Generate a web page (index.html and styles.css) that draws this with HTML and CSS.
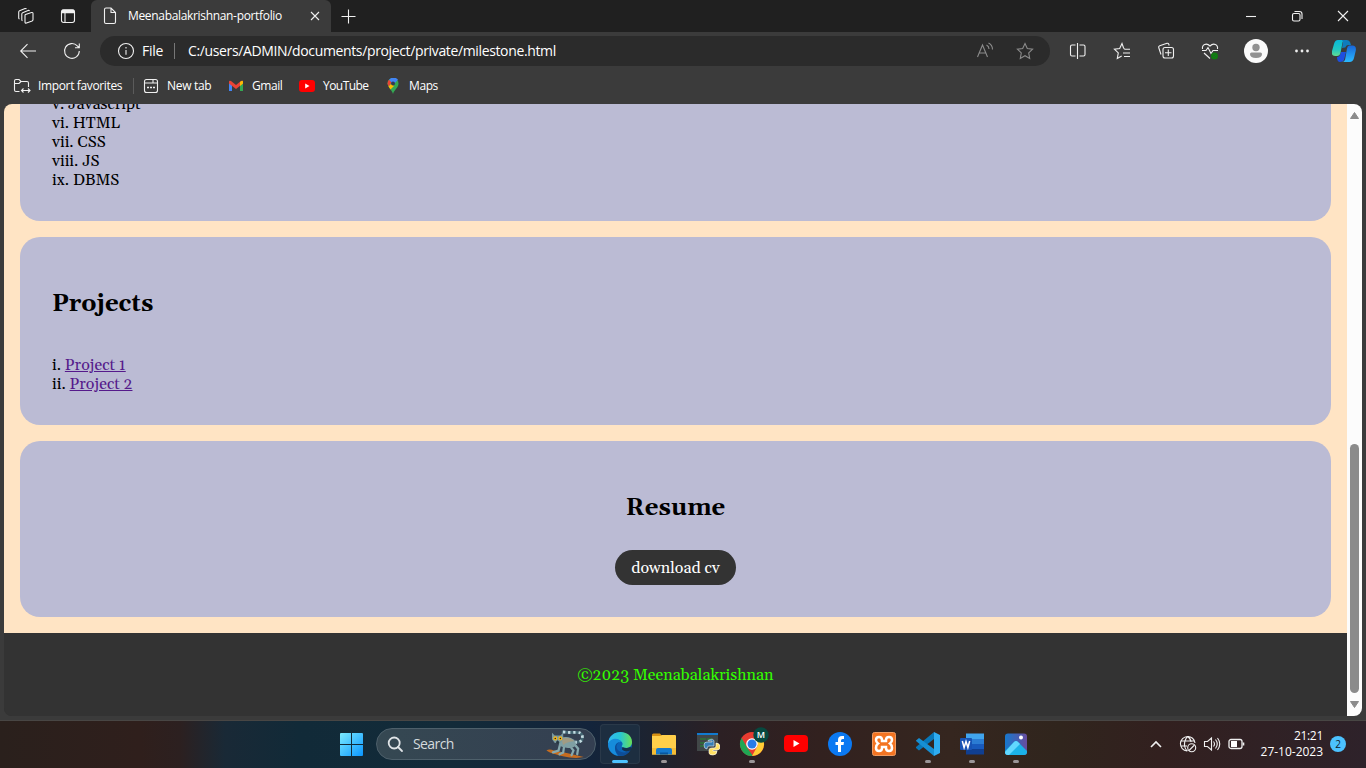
FILE: index.html
```html
<!DOCTYPE html>
<html lang="en">
<head>
<meta charset="utf-8">
<title>Meenabalakrishnan-portfolio</title>
<link rel="stylesheet" href="styles.css">
</head>
<body>
<div class="browser">
  <div class="titlebar">
    <div class="cell tb-a"><svg width="18" height="18" viewBox="0 0 18 18" class="line"><path d="M8.500 7.500 14.500 5.500q1.500-.3 1.500 1v6q0 1-.9 1.400L9.500 16q-1.500.5-1.500-1V8.500q0-.7.5-1zM5.500 13.800q-.7-.3-.7-1.300V7q0-.9.9-1.300L11 3.500q1-.3 1.600.4M2.500 12q-.8-.3-.8-1.300V5q0-.9.9-1.300L8 1.600q1-.3 1.500.4"/></svg></div>
    <div class="cell tb-b"><svg width="16" height="16" viewBox="0 0 16 16" class="line"><rect x="1.500" y="1.700" width="13" height="12.800" rx="2.200"/><path d="M2 3.500h12" stroke-width="3.500"/><path d="M5 5v9.500"/></svg></div>
    <div class="tab">
      <svg width="14" height="18" viewBox="0 0 14 18" class="line"><path d="M1.500 2.500q0-1.500 1.500-1.500h5l4.500 4.500V15q0 1.500-1.500 1.500H3Q1.500 16.500 1.500 15zM8 1v4.500h4.500"/></svg>
      <span class="tabtitle">Meenabalakrishnan-portfolio</span>
      <svg width="10" height="10" viewBox="0 0 10 10" class="line"><path d="M1 1l8 8M9 1l-8 8"/></svg>
    </div>
    <div class="cell plus"><svg width="15" height="15" viewBox="0 0 15 15" class="line"><path d="M7.500.5v14M.5 7.500h14"/></svg></div>
    <div class="winbtns">
      <div class="cell"><svg width="12" height="12" viewBox="0 0 12 12" class="line"><path d="M1 6.500h10"/></svg></div>
      <div class="cell"><svg width="12" height="12" viewBox="0 0 12 12" class="line"><rect x="1.500" y="3.500" width="7.500" height="7.500" rx="1.500"/><path d="M3.500 1.500H8.500Q11 1.500 11 4V9"/></svg></div>
      <div class="cell"><svg width="12" height="12" viewBox="0 0 12 12" class="line"><path d="M1 1l10 10M11 1 1 11"/></svg></div>
    </div>
  </div>
  <div class="toolbar">
    <div class="cell back"><svg width="18" height="16" viewBox="0 0 18 16" class="line"><path d="M17 8H2M8.500 1.200 1.700 8l6.800 6.800"/></svg></div>
    <div class="cell reload"><svg width="18" height="18" viewBox="0 0 18 18" class="line"><path d="M16.300 9A7.400 7.400 0 1 1 14.300 3.900L16 5.500M16.300 1.500v4.200H12"/></svg></div>
    <div class="urlbar">
      <svg width="18" height="18" viewBox="0 0 18 18" class="line"><circle cx="9" cy="9" r="7.500"/><path d="M9 8v4.800M9 5v1.500"/></svg>
      <span class="file">File</span><i class="sep"></i>
      <span class="url">C:/users/ADMIN/documents/project/private/milestone.html</span>
      <svg class="dim read" width="18" height="18" viewBox="0 0 18 18"><path d="M1.500 15 6.500 3l5 12M3.200 11h6.600M10.500 3q2.500 1.300 2.500 4M12.500 1q4 2 4 6.500"/></svg>
      <svg class="dim" width="18" height="18" viewBox="0 0 18 18"><path d="m9 1.500 2.300 5 5.300.7-3.900 3.700 1 5.500L9 13.700l-4.700 2.700 1-5.500L1.400 7.200l5.300-.7z"/></svg>
    </div>
    <div class="tools">
      <div class="cell"><svg width="18" height="18" viewBox="0 0 18 18" class="line"><path d="M8.500 1v16M6.500 3H3Q1.500 3 1.500 4.500v8Q1.500 14 3 14h3.500M10.500 3h4Q16 3 16 4.500v8q0 1.500-1.500 1.500h-4"/></svg></div>
      <div class="cell"><svg width="18" height="18" viewBox="0 0 18 18" class="line"><path d="M10.500 5.800 9 1.500 6.700 6.500l-5.300.7 3.900 3.700-1 5.500L8.700 14M11.500 7.200H17M10 11h7M11 14.500h6M10.500 5.800l1 1.400"/></svg></div>
      <div class="cell"><svg width="18" height="18" viewBox="0 0 18 18" class="line"><rect x="6" y="5.500" width="10.500" height="10.500" rx="2"/><path d="M11.300 7.500v6.500M8 10.800h6.500M4 12.500 1.700 5.500q-.4-1.300 1-1.800L10 1.300q1.300-.3 1.800 1l.4 1.200"/></svg></div>
      <div class="cell"><svg width="18" height="18" viewBox="0 0 18 18" class="line"><path d="M1.500 7C.8 2.500 5.500.5 9 4c3.500-3.500 8.200-1.500 7.500 3M1 8.500h4L7 5.500l3 6 2-3h5M3 11l6 5.500"/><circle cx="13.500" cy="14" r="3.500" fill="#107c10" stroke="none"/><path d="m12 14 1 1 2-2" stroke="#263" stroke-width=".7"/></svg></div>
      <div class="cell avatar"><svg width="24" height="24" viewBox="0 0 24 24"><circle cx="12" cy="12" r="12" fill="#fafafa"/><circle cx="12" cy="8.500" r="3.700" fill="#919191"/><path d="M6 15q0-1.500 1.500-1.500h9Q18 13.500 18 15q0 4-6 4t-6-4z" fill="#919191"/></svg></div>
      <div class="cell"><svg width="16" height="4" viewBox="0 0 16 4"><g fill="#eee"><circle cx="2.500" cy="2" r="1.400"/><circle cx="8" cy="2" r="1.400"/><circle cx="13.500" cy="2" r="1.400"/></g></svg></div>
      <div class="cell cop"><svg width="24" height="24" viewBox="0 0 24 24">
        <defs><linearGradient id="c1" x2="0" y2="1"><stop stop-color="#08b8d8"/><stop offset=".6" stop-color="#22c7c1"/><stop offset="1" stop-color="#62dd93"/></linearGradient><linearGradient id="c2" x2="0" y2="1"><stop stop-color="#1865d8"/><stop offset="1" stop-color="#2abaff"/></linearGradient></defs>
        <path d="M9 13h5l-2 8q-1 2-4 2-3 0-3-5 3 0 4-5z" fill="#1d4fe0"/><path d="M6 1h7q-2 0-2.500 2.500L8.500 14q-.8 3-3.500 3H3q-4 0-3-5L2 5q1-4 4-4z" fill="url(#c1)"/><path d="M10 1h5q2.500 0 3.200 2.500L19 6h-3q-2 0-2.700 2.500L10 9l1-6z" fill="#0f7cbc"/><path d="M17 6.500h3.500q4 0 3.300 5L22 19q-1 4-4.500 4H10q2.500 0 3.100-2.500L15 9.500q.5-2.500 2-3z" fill="url(#c2)"/></svg></div>
    </div>
  </div>
  <div class="favbar">
    <svg width="18" height="16" viewBox="0 0 18 16" class="line"><path d="M6.500 13.500H3q-1.500 0-1.500-1.500V3q0-1.500 1.500-1.500h3L8 3.500h6q1.500 0 1.500 1.500v4M1.500 5.500H6l2-2M8.500 12.500H17M10.500 10.500l-2 2 2 2M15 10.500l2 2-2 2"/></svg>
    <span class="f1">Import favorites</span><i class="sep s2"></i>
    <svg class="line i2" width="16" height="16" viewBox="0 0 16 16"><rect x="1.500" y="1.500" width="13" height="13" rx="2"/><path d="M1.500 5h8.500V1.500M10 5h4.500"/><path d="M4 9.500h2M7 9.500h2M10 9.500h2" stroke-width="1.600"/></svg>
    <span class="f2">New tab</span>
    <svg class="i3" width="16" height="12" viewBox="0 0 16 12"><path d="M1 1v10h3V5" fill="#4285f4"/><path d="M12 5v6h3V1" fill="#34a853"/><path d="M1 2q0-2 2-1l5 4 5-4q2-1 2 1v1.500L8 9 1 3.500z" fill="#ea4335"/><path d="M12 2q3-2.500 3 0v1.500L12 6z" fill="#fbbc04"/></svg>
    <span class="f3">Gmail</span>
    <svg class="i4" width="16" height="12" viewBox="0 0 16 12"><rect width="16" height="12" rx="3" fill="#f00"/><path d="m6.200 3.500 4.300 2.500-4.300 2.500z" fill="#fff"/></svg>
    <span class="f4">YouTube</span>
    <svg class="i5" width="12" height="16" viewBox="0 0 12 16"><path d="M6 0a5.500 5.500 0 0 1 5.500 5.500C11.500 10 7.500 11 6 16 5 12 1 9.500.5 5.500A5.500 5.500 0 0 1 6 0z" fill="#34a853"/><path d="M2 2a5.500 5.500 0 0 1 9-.2L6 7z" fill="#4285f4"/><path d="M2 1.800 4.500 4.500 1.500 8.500Q-.5 4.500 2 1.800z" fill="#ea4335"/><path d="m1.500 8.500 3-3L7 8l-3.500 3.500z" fill="#fbbc04"/><circle cx="6" cy="5.500" r="2" fill="#333b50"/></svg>
    <span class="f5">Maps</span>
  </div>
  <div class="viewport">
    <div class="page">
      <section class="card skills"><div class="cut">v. Javascript</div><div>vi. HTML</div><div>vii. CSS</div><div>viii. JS</div><div>ix. DBMS</div></section>
      <section class="card projects"><h2>Projects</h2><div>i. <a href="#">Project 1</a></div><div>ii. <a href="#">Project 2</a></div></section>
      <section class="card resume"><h2>Resume</h2><a class="btn" href="#">download cv</a></section>
      <footer>©2023 Meenabalakrishnan</footer>
    </div>
    <div class="scroll"><svg width="9" height="7" viewBox="0 0 9 7"><path d="M4.500.5 8.500 6.500H.5z" fill="#8b8b8b" stroke="#8b8b8b" stroke-linejoin="round"/></svg><div class="thumb"></div><svg width="9" height="7" viewBox="0 0 9 7"><path d="M4.500 6.500.5.500h8z" fill="#8b8b8b" stroke="#8b8b8b" stroke-linejoin="round"/></svg></div>
  </div>
</div>
<div class="taskbar">
  <svg class="start" width="24" height="24" viewBox="0 0 24 24"><defs><linearGradient id="w" x2="1" y2="1"><stop stop-color="#7cebff"/><stop offset="1" stop-color="#0a96ff"/></linearGradient></defs><path d="M0 2q0-1 1-1h10v11H0zM12 1h10q1 0 1 1v10H12zM0 13h11v11H1q-1 0-1-1zM12 13h11v10q0 1-1 1H12z" fill="url(#w)"/></svg>
  <div class="search">
    <svg width="17" height="17" viewBox="0 0 17 17" fill="none" stroke="#e0e4e7" stroke-width="1.800"><circle cx="7.200" cy="7" r="5.500"/><path d="m11 11 4 4" stroke-linecap="round"/></svg>
    <span>Search</span>
    <svg class="lemur" width="40" height="28" viewBox="0 0 42 30"><path d="M0 22q3-2 8 0l15 3 17 4-8 1q-15-1-22-4-3 0-10-4z" fill="#c56c20"/><path d="M30 13q9 1 8.500-6 0-5-8-4.500-5 .5-14-.5" fill="none" stroke="#456673" stroke-width="3"/><path d="M30 13q9 1 8.500-6 0-5-8-4.500-5 .5-14-.5" fill="none" stroke="#c4dce2" stroke-width="3" stroke-dasharray="2.500 3"/><path d="M29 14l5 6-1 6M25 17l4 5-2 5M15 14l-2 8-6 2M19 17l-1 7-4 2" fill="none" stroke="#86a9ae" stroke-width="2.400" stroke-linecap="round"/><path d="M14 9q10-4 17 3 2 6-4 7-8 1-13-2z" fill="#7f9fa3"/><path d="M16 9q9-2 14 3-7 0-12 4z" fill="#a19b83"/><path d="m6 3 3 3h6l3-3v7l-3 4H9l-3-4z" fill="#7999a0"/><circle cx="9.500" cy="9" r="2.200" fill="#f1b51d"/><circle cx="15" cy="9" r="2.200" fill="#f1b51d"/><circle cx="9.500" cy="9" r=".8" fill="#222"/><circle cx="15" cy="9" r=".8" fill="#222"/><path d="m10 13 2-2 2 2-2 2z" fill="#253640"/></svg>
  </div>
  <div class="apps">
    <div class="app active"><svg width="24" height="24" viewBox="0 0 24 24"><defs><linearGradient id="e" x2="1"><stop stop-color="#35b9f1"/><stop offset=".5" stop-color="#27c6d5"/><stop offset="1" stop-color="#69df55"/></linearGradient></defs><circle cx="12" cy="12" r="12" fill="#0b63b8"/><path d="M0 12C1-4 24-3 24 10c0 5-4 7-9 5.500-1.500-.5-1.500-1.200-.8-2.200C17 8 4 4 0 12z" fill="url(#e)"/><path d="M0 12C3 5 11 6 13 10c-6 0-8 8-3 13.800C4 23 0 18 0 12z" fill="#168cdb"/><path d="M13 10c-5 0-7 8 .5 10 4 1.200 7-.5 9-3-3 7-8 7-12 6.500C5 18 6 10 13 10z" fill="#0d4d98"/><path d="M14.400 14.900q3.600 2.200 8 0l1.600 1.200-1.500 2.500q-6 2-8.500-1z" fill="#14324e"/></svg><i class="ind wide"></i></div>
    <div class="app"><svg width="24" height="24" viewBox="0 0 24 24"><path d="M0 3q0-1.500 1.500-1.500H8L10 4H0z" fill="#d79113"/><path d="M0 4h8l2-1h13q1 0 1 1v18.500H0z" fill="#ffcf4a"/><path d="M0 16h24v6.500H0z" fill="#f5bd35"/><path d="M4 22.500V18q0-2 2-2h12q2 0 2 2v4.500z" fill="#1479ce"/><path d="M8 22.500v-2h8v2z" fill="#07569e"/></svg><i class="ind"></i></div>
    <div class="app"><svg width="24" height="24" viewBox="0 0 24 24"><path d="M1 1h21v18H1z" fill="#414748"/><path d="M1 1h21v2H1z" fill="#117bd0"/><path d="M4 7h6m1 0h5M4 11h5M4 14h4" stroke="#2d7536" stroke-width="1.500"/><path d="M12 8q4-2 5 1v5h-5q-2 0-2 3-3 0-3-4 0-3 3-3h5v-1h-4q0-1 1-1z" transform="translate(1)" fill="#387eb5" stroke="#dceaf2" stroke-width=".6"/><path d="M20 11q4 0 4 4 0 3-3 3h-4v1h4q0 4-4 4-4 0-4-2v-3q0-2 3-2h2q2 0 2-2z" fill="#ffe063" stroke="#fff" stroke-width=".6"/></svg></div>
    <div class="app"><svg width="30" height="24" viewBox="0 0 30 24" class="chrome"><circle cx="12" cy="12" r="12" fill="#e83b30"/><path d="M1.600 6 8 17l5 7A12 12 0 0 1 1.600 6z" fill="#20a653"/><path d="M12 7h11A12 12 0 0 1 12 24l6-11z" fill="#ffcd35"/><circle cx="12" cy="12" r="5.800" fill="#fff"/><circle cx="12" cy="12" r="4.500" fill="#277be8"/><circle cx="21" cy="3" r="7.700" fill="#07483f"/><text x="21" y="6.300" text-anchor="middle" class="m">M</text></svg><i class="ind"></i></div>
    <div class="app"><svg width="24" height="24" viewBox="0 0 24 24"><rect y="3" width="24" height="17" rx="4" fill="#f00"/><path d="m9.500 8 6 3.500-6 3.500z" fill="#fff"/></svg></div>
    <div class="app"><svg width="24" height="24" viewBox="0 0 24 24"><circle cx="12" cy="12" r="12" fill="#0b79f2"/><path d="M10 20v-7H7.500v-3H10V8q0-4 4-4h2v3h-1.500Q13 7 13 8.500V10h3l-.5 3H13v7z" fill="#fff"/></svg></div>
    <div class="app"><svg width="24" height="24" viewBox="0 0 24 24"><rect x=".5" y=".5" width="23" height="23" rx="2" fill="#f37422" stroke="#ee9b62"/><path d="M10 9V8q0-3-3-3T4 8q0 2 2 3.500Q4 13 4 16q0 3 3 3t3-3v-1h4v1q0 3 3 3t3-3q0-3-2-4.500Q20 10 20 8q0-3-3-3t-3 3v1z" fill="none" stroke="#fff" stroke-width="2.500"/></svg></div>
    <div class="app"><svg width="24" height="24" viewBox="0 0 24 24"><path d="M18 0v7L3 18.500 0 16v-1z" fill="#0877b8"/><path d="M0 8.500 3 6l15 11v7L0 9z" fill="#168fd3"/><path d="m18 0 6 3v18l-6 3z" fill="#2eacf0"/></svg><i class="ind"></i></div>
    <div class="app"><svg width="24" height="24" viewBox="0 0 24 24"><path d="M6 1.500h18v6H6z" fill="#41a5ee"/><path d="M6 7h18v5H6z" fill="#2b7cd3"/><path d="M6 12h18v5H6z" fill="#185abd"/><path d="M6 17h18v5.500H6z" fill="#103f91"/><rect y="6" width="12" height="12" rx="1" fill="#1753b4"/><path d="m2.300 9 1.800 6.500L6 9.500l1.900 6L9.700 9" fill="none" stroke="#fff" stroke-width="1.500"/></svg><i class="ind"></i></div>
    <div class="app"><svg width="24" height="24" viewBox="0 0 24 24"><defs><linearGradient id="p" x2="1"><stop stop-color="#1678cd"/><stop offset="1" stop-color="#684c9f"/></linearGradient></defs><rect x="1" y="1.500" width="22" height="21.500" rx="3" fill="url(#p)"/><path d="M1 19 10 10q2-2 4 0l9 9v1q0 3-3 3H4q-3 0-3-3z" fill="#1bb2e8"/><path d="m1 20 9-10q2-2 4 0l2 2L5 23H4q-3 0-3-3z" fill="#62d8ff"/><circle cx="17" cy="5.500" r="2" fill="#fff"/></svg><i class="ind"></i></div>
  </div>
  <div class="tray">
    <svg width="12" height="8" viewBox="0 0 12 8" class="line heavy"><path d="m1 7 5-5 5 5"/></svg>
    <svg width="18" height="18" viewBox="0 0 18 18" class="line t2"><path d="M8 16A7.300 7.300 0 1 1 16 8M1.500 6h14M1.500 11H8M8.700 1.500Q5 5 5.500 11q.5 3 3 5M8.700 1.500Q12 4 12 7"/><circle cx="12.700" cy="12.700" r="4"/><path d="m10 15.500 5.500-5.500"/></svg>
    <svg width="18" height="16" viewBox="0 0 18 16" class="line t3"><path d="M1.500 5.500h3L8.500 2v12l-4-3.500h-3zM10.500 5.500q2 2.500 0 5M12.500 3.500q3.500 4.500 0 9M14.500 2q4.500 6 0 12"/></svg>
    <svg width="17" height="12" viewBox="0 0 17 12" class="line t4"><rect x="1" y="1.500" width="13" height="9" rx="2" stroke-width="1.300"/><path d="M15.500 4.500v3" stroke-width="1.600"/><path d="M3 3h6v6H3z" fill="#fff" stroke="none"/></svg>
    <div class="clock"><div class="time">21:21</div><div class="date">27-10-2023</div></div>
    <div class="badge">2</div>
  </div>
</div>
</body>
</html>
```
FILE: styles.css
```css
* { box-sizing: border-box; }
body { margin: 0; width: 1366px; height: 768px; overflow: hidden; background: #3b3b3b; color: #fff; font: 12px/16px "Segoe UI", "Open Sans", "Noto Sans", sans-serif; display: flex; flex-direction: column; }
svg { display: block; flex: none; }
span { white-space: nowrap; }
.line { fill: none; stroke: #f0f0f0; stroke-width: 1.1; }
.heavy { stroke-width: 1.600; }
.cell { display: flex; align-items: center; justify-content: center; flex: none; }
.browser { height: 720px; display: flex; flex-direction: column; background: #3b3b3b; }
.titlebar { height: 32px; background: #202020; display: flex; flex: none; }
.tb-a { width: 52px; }
.tb-b { width: 32px; }
.tab { margin-left: 7px; width: 240px; background: #3b3b3b; border-radius: 6px 6px 0 0; display: flex; align-items: center; padding: 0 11px 0 12px; }
.tabtitle { margin-left: 11px; flex: 1; letter-spacing: -.33px; }
.plus { width: 35px; }
.winbtns { margin-left: auto; display: flex; }
.winbtns .cell { width: 46px; }
.toolbar { height: 38px; display: flex; align-items: center; flex: none; }
.back { width: 56px; }
.reload { width: 32px; }
.urlbar { margin-left: 12px; width: 950px; height: 30px; border-radius: 15px; background: #2b2b2b; display: flex; align-items: center; padding: 0 16px 0 17px; font-size: 14px; }
.file { margin-left: 7px; width: 32px; letter-spacing: -.3px; }
.url { margin-left: 13px; letter-spacing: -.36px; flex: 1; }
.sep { width: 1px; height: 16px; background: #777; }
.dim { fill: none; stroke: #8b8b8b; stroke-width: 1.1; }
.read { margin-right: 22px; }
.tools { display: flex; margin-left: 6px; }
.tools .cell { width: 44px; }
.tools .avatar { width: 48px; }
.tools .cop { width: 40px; }
.favbar { height: 34px; display: flex; align-items: center; padding: 0 0 3px 13px; flex: none; }
.f1 { margin-left: 7px; width: 95px; letter-spacing: -.36px; }
.s2 { background: #5b5b5b; }
.i2 { margin-left: 9px; }
.f2 { margin-left: 8px; width: 45px; letter-spacing: -.3px; }
.i3 { margin-left: 16px; }
.f3 { margin-left: 8px; width: 32px; letter-spacing: -.45px; }
.i4 { margin-left: 15px; }
.f4 { margin-left: 8px; width: 47px; letter-spacing: -.55px; }
.i5 { margin-left: 17px; }
.f5 { margin-left: 10px; letter-spacing: -.4px; }
.viewport { margin: 0 4px; height: 612px; border-radius: 8px; overflow: hidden; display: flex; background: #333; }
.page { width: 1343px; background: linear-gradient(#ffe4c4 540px, #333 540px); color: #000; font: 16px/19px Georgia, Gelasio, "DejaVu Serif Condensed", serif; display: flex; flex-direction: column; gap: 16px; overflow: hidden; }
.card { margin: 0 16px; padding: 32px; border-radius: 20px; background: #bbbbd4; flex: none; }
.skills { height: 117px; padding-top: 0; border-radius: 0 0 20px 20px; }
.cut { margin-top: -9px; }
.projects { height: 188px; }
.resume { height: 176px; text-align: center; }
h2 { font-size: 24px; line-height: 27px; margin: 22px 0 20px; }
.projects h2 { margin-bottom: 38px; }
.resume h2 { margin-bottom: 28px; }
.page a { color: #551a8b; }
.page .btn { display: block; width: 121px; height: 35px; margin: 0 auto; border-radius: 18px; background: #333; color: #fff; line-height: 37px; text-decoration: none; }
footer { height: 83px; background: #333; color: #3f0; text-align: center; padding-top: 33px; }
.scroll { width: 15px; background: #fcfcfc; display: flex; flex-direction: column; align-items: center; padding: 8px 0; }
.thumb { width: 9px; height: 249px; border-radius: 5px; background: #8b8b8b; margin: 325px 0 8px; flex: none; }
.taskbar { height: 48px; display: flex; align-items: center; border-top: 1px solid #484644; padding-bottom: 1px; background: linear-gradient(90deg, #2a201c 0, #2f1f1c 140px, #2c2020 180px, #192936 225px, #112a38 300px, #132b39 450px, #13243b 590px, #1d2330 650px, #2c2024 720px, #32211f 820px, #35261f 950px, #30251d 1060px, #32201f 1160px, #2e222a 1366px); }
.start { margin-left: 340px; }
.search { margin-left: 12px; width: 220px; height: 32px; border-radius: 16px; border: 1px solid #4e606b; background: linear-gradient(90deg, #354852, #343f51); display: flex; align-items: center; padding: 0 9px 0 10px; }
.search span { margin-left: 9px; flex: 1; font-size: 14px; color: #d4dadd; letter-spacing: -.6px; }
.apps { display: flex; gap: 4px; margin-left: 4px; }
.app { width: 40px; height: 40px; border-radius: 4px; display: flex; flex-direction: column; align-items: center; padding-top: 8px; }
.active { background: #1d2e40; box-shadow: inset 0 0 0 1px #2a3949; }
.ind { width: 6px; height: 3px; border-radius: 2px; background: #9b9698; margin-top: 4px; }
.wide { width: 16px; background: #4cc2ff; }
.chrome { margin-left: 6px; overflow: visible; }
.m { font-size: 9px; font-weight: 600; fill: #fff; }
.tray { margin-left: auto; display: flex; align-items: center; padding-right: 20px; }
.t2 { margin-left: 17px; }
.t3 { margin-left: 6px; }
.t4 { margin-left: 7px; }
.clock { width: 78px; text-align: right; }
.time { letter-spacing: -.3px; }
.date { letter-spacing: -.02px; }
.badge { margin-left: 7px; width: 16px; height: 16px; border-radius: 50%; background: #4cc2ff; color: #10202c; font-size: 10px; text-align: center; }
```
